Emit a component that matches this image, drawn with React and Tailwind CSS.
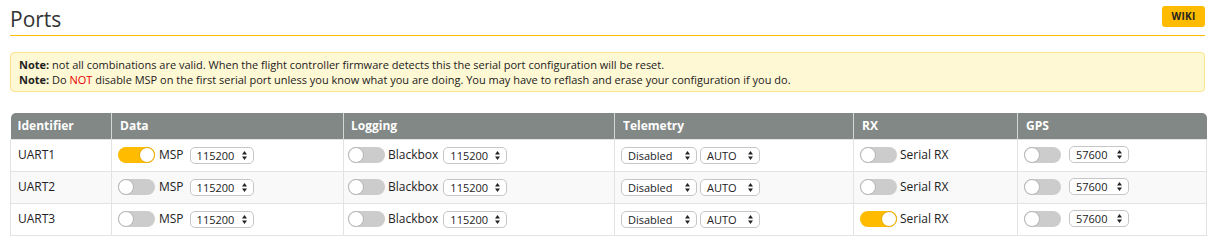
import React from 'react';

const ports = [
  { id: 'UART1', msp: true, rx: false },
  { id: 'UART2', msp: false, rx: false },
  { id: 'UART3', msp: false, rx: true },
];

function Toggle({ on }) {
  return (
    <span
      className={`relative inline-block w-[37px] h-[16px] rounded-full shrink-0 ${
        on ? 'bg-[#ffbb00]' : 'bg-[#cccccc]'
      }`}
    >
      <span
        className={`absolute top-0 w-[16px] h-[16px] rounded-full bg-white border ${
          on ? 'right-0 border-[#e8a800]' : 'left-0 border-[#b5b5b5]'
        }`}
      />
    </span>
  );
}

function Select({ value, width }) {
  return (
    <span
      className="inline-flex items-center justify-between h-[17px] pl-[6px] pr-[6px] border border-[#c6c6c6] rounded-[5px] bg-white text-[11px] text-[#222] shrink-0"
      style={{ width }}
    >
      <span className="leading-none">{value}</span>
      <svg width="5" height="9" viewBox="0 0 5 9" className="shrink-0">
        <path d="M2.5 0 L5 3.5 L0 3.5 Z" fill="#222" />
        <path d="M2.5 9 L5 5.5 L0 5.5 Z" fill="#222" />
      </svg>
    </span>
  );
}

export default function App() {
  return (
    <div className="w-[1213px] h-[247px] bg-white text-[#333] font-['Open_Sans',sans-serif] overflow-hidden">
      <div className="ml-[10px] mr-[8px] pt-[6px] flex items-start justify-between border-b border-[#ffbb00] h-[36px]">
        <h1 className="text-[21px] leading-[24px] font-normal text-[#333] mt-[1px]">Ports</h1>
        <a className="w-[43px] h-[21px] flex items-center justify-center rounded-[3px] bg-[#ffbb00] text-[10px] font-bold text-[#222] tracking-[0.3px]">
          WIKI
        </a>
      </div>

      <div className="ml-[10px] mr-[8px] mt-[16px] h-[40px] px-[8px] pt-[4px] bg-[#fff8d4] border border-[#fbe38c] rounded-[4px] text-[11px] leading-[15px] text-[#222]">
        <p>
          <strong>Note:</strong> not all combinations are valid. When the flight controller firmware
          detects this the serial port configuration will be reset.
        </p>
        <p>
          <strong>Note:</strong> Do <span className="text-[#e60000]">NOT</span> disable MSP on the
          first serial port unless you know what you are doing. You may have to reflash and erase
          your configuration if you do.
        </p>
      </div>

      <table className="ml-[10px] mt-[21px] w-[1196px] table-fixed border-collapse text-[12px]">
        <colgroup>
          <col className="w-[101px]" />
          <col className="w-[232px]" />
          <col className="w-[271px]" />
          <col className="w-[239px]" />
          <col className="w-[164px]" />
          <col className="w-[189px]" />
        </colgroup>
        <thead>
          <tr className="h-[26px] bg-[#828885] text-white font-bold text-left">
            <th className="pl-[7px] rounded-tl-[5px]">Identifier</th>
            <th className="pl-[8px] border-l border-[#d6d8d6]">Data</th>
            <th className="pl-[7px] border-l border-[#d6d8d6]">Logging</th>
            <th className="pl-[8px] border-l border-[#d6d8d6]">Telemetry</th>
            <th className="pl-[8px] border-l border-[#d6d8d6]">RX</th>
            <th className="pl-[8px] border-l border-[#d6d8d6] rounded-tr-[5px]">GPS</th>
          </tr>
        </thead>
        <tbody>
          {ports.map((p, i) => (
            <tr
              key={p.id}
              className={`h-[32px] border border-[#e3e3e3] ${i === 1 ? 'bg-[#f9f9f9]' : 'bg-white'}`}
            >
              <td className="pl-[7px] text-[#222]">{p.id}</td>
              <td className="pl-[6px] border-l border-[#e3e3e3]">
                <div className="flex items-center">
                  <Toggle on={p.msp} />
                  <span className="ml-[4px] mr-[6px] text-[#222]">MSP</span>
                  <Select value="115200" width={64} />
                </div>
              </td>
              <td className="pl-[4px] border-l border-[#e3e3e3]">
                <div className="flex items-center">
                  <Toggle on={false} />
                  <span className="ml-[3px] mr-[5px] text-[#222]">Blackbox</span>
                  <Select value="115200" width={64} />
                </div>
              </td>
              <td className="pl-[6px] border-l border-[#e3e3e3]">
                <div className="flex items-center gap-[3px]">
                  <Select value="Disabled" width={76} />
                  <Select value="AUTO" width={60} />
                </div>
              </td>
              <td className="pl-[6px] border-l border-[#e3e3e3]">
                <div className="flex items-center">
                  <Toggle on={p.rx} />
                  <span className="ml-[3px] text-[#222]">Serial RX</span>
                </div>
              </td>
              <td className="pl-[6px] border-l border-[#e3e3e3]">
                <div className="flex items-center">
                  <Toggle on={false} />
                  <span className="ml-[8px]">
                    <Select value="57600" width={60} />
                  </span>
                </div>
              </td>
            </tr>
          ))}
        </tbody>
      </table>
    </div>
  );
}
